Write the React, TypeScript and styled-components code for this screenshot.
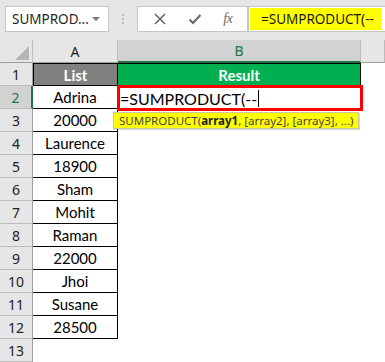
import React from "react";
import styled, { createGlobalStyle, css } from "styled-components";

const GlobalStyle = createGlobalStyle`
  html, body {
    margin: 0;
    padding: 0;
    background: #ffffff;
    overflow: hidden;
  }
`;

const Sheet = styled.div`
  width: 385px;
  height: 362px;
  display: flex;
  flex-direction: column;
  font-family: "Segoe UI", "Noto Sans", "Liberation Sans", sans-serif;
`;

const FormulaRow = styled.div`
  height: 40px;
  box-sizing: border-box;
  padding: 6px 0 8px 5px;
  display: flex;
  align-items: stretch;
  background: #e6e6e6;
`;

const NameBox = styled.div`
  width: 104px;
  box-sizing: border-box;
  border: 1px solid #c6c6c6;
  background: #fff;
  display: flex;
  align-items: center;
  justify-content: space-between;
  padding: 0 8px 0 6px;
  font-size: 13.5px;
  color: #262626;
  white-space: nowrap;
`;

const DropArrow = styled.span`
  width: 0;
  height: 0;
  border-left: 4px solid transparent;
  border-right: 4px solid transparent;
  border-top: 4px solid #777;
`;

const Grip = styled.div`
  width: 28px;
  display: flex;
  flex-direction: column;
  align-items: center;
  justify-content: center;
  gap: 2px;
  span {
    width: 2px;
    height: 2px;
    background: #b8b8b8;
  }
`;

const FxBox = styled.div`
  width: 111px;
  box-sizing: border-box;
  border: 1px solid #c6c6c6;
  background: #fff;
  display: flex;
  align-items: center;
  justify-content: space-around;
  padding: 0 4px;
`;

const FxLabel = styled.span`
  font-family: "Liberation Serif", "DejaVu Serif", serif;
  font-style: italic;
  font-size: 14px;
  color: #666;
  letter-spacing: -0.5px;
`;

const FormulaInput = styled.div`
  flex: 1;
  min-width: 0;
  box-sizing: border-box;
  border: 1px solid #c6c6c6;
  border-right: none;
  background: #fff;
  display: flex;
  align-items: stretch;
  padding: 1px 0 1px 1px;
`;

const Highlight = styled.span`
  background: #ffff00;
  display: flex;
  align-items: center;
  padding: 0 7px 0 11px;
  font-size: 13.5px;
  color: #1a1a1a;
  white-space: nowrap;
`;

const Grid = styled.div`
  position: relative;
  display: grid;
  grid-template-columns: 33px 85px 243px 1fr;
  grid-auto-rows: 23px;
  font-family: Lato, "Open Sans", sans-serif;
  font-size: 15px;
`;

const Corner = styled.div`
  background: #e6e6e6;
  border-right: 1px solid #bcbcbc;
  border-bottom: 1px solid #9e9e9e;
  box-sizing: border-box;
  position: relative;
  &::after {
    content: "";
    position: absolute;
    right: 3px;
    bottom: 2px;
    border-left: 14px solid transparent;
    border-bottom: 14px solid #b5b5b5;
  }
`;

const ColHead = styled.div<{ $active?: boolean }>`
  box-sizing: border-box;
  background: #e6e6e6;
  border-right: 1px solid #bcbcbc;
  border-bottom: 1px solid #9e9e9e;
  display: flex;
  align-items: center;
  justify-content: center;
  font-family: "Segoe UI", "Noto Sans", sans-serif;
  font-size: 14px;
  color: #222;
  ${(p) =>
    p.$active &&
    css`
      background: #d2d2d2;
      color: #217346;
      border-bottom: 2px solid #217346;
    `}
`;

const RowHead = styled.div<{ $active?: boolean }>`
  box-sizing: border-box;
  background: #e6e6e6;
  border-right: 1px solid #9e9e9e;
  border-bottom: 1px solid #bcbcbc;
  display: flex;
  align-items: center;
  justify-content: center;
  font-family: "Segoe UI", "Noto Sans", sans-serif;
  font-size: 14px;
  color: #222;
  ${(p) =>
    p.$active &&
    css`
      background: #d2d2d2;
      color: #217346;
      border-right: 2px solid #217346;
    `}
`;

const Cell = styled.div<{ $fill?: string; $boxed?: boolean; $leftEdge?: boolean }>`
  box-sizing: border-box;
  display: flex;
  align-items: center;
  justify-content: center;
  color: #000;
  background: ${(p) => p.$fill || "#fff"};
  ${(p) =>
    p.$boxed &&
    css`
      border-right: 1px solid #000;
      border-bottom: 1px solid #000;
    `}
  ${(p) => p.$leftEdge && "border-left: 1px solid #000;"}
`;

const HeadCell = styled(Cell)`
  color: #fff;
  font-weight: 700;
  border-top: 1px solid #000;
`;

const Empty = styled.div``;

const EditCell = styled.div`
  position: relative;
  z-index: 2;
  margin: -1px -2px -2px -1px;
  border: 3px solid #ff0000;
  background: #fff;
  display: flex;
  align-items: center;
  font-size: 16px;
  color: #000;
  white-space: nowrap;
`;

const Caret = styled.span`
  display: inline-block;
  width: 1px;
  height: 17px;
  background: #000;
  margin-left: 1px;
`;

const Tip = styled.div`
  position: absolute;
  left: 113px;
  top: 72px;
  z-index: 3;
  height: 17px;
  box-sizing: border-box;
  padding: 0 5px;
  background: #ffff00;
  border: 1px solid #c9c9a0;
  box-shadow: 1px 1px 1px rgba(0, 0, 0, 0.15);
  display: flex;
  align-items: center;
  font-family: "Segoe UI", "Noto Sans", sans-serif;
  font-size: 11.5px;
  color: #444;
  white-space: nowrap;
  b {
    color: #222;
  }
`;

const items = [
  "Adrina",
  "20000",
  "Laurence",
  "18900",
  "Sham",
  "Mohit",
  "Raman",
  "22000",
  "Jhoi",
  "Susane",
  "28500",
];

function XIcon() {
  return (
    <svg width="14" height="14" viewBox="0 0 14 14">
      <path d="M2 2 L12 12 M12 2 L2 12" stroke="#6a6a6a" strokeWidth="1.6" fill="none" />
    </svg>
  );
}

function CheckIcon() {
  return (
    <svg width="14" height="14" viewBox="0 0 14 14">
      <path d="M1.5 7.5 L5 11 L12.5 3" stroke="#6a6a6a" strokeWidth="2.2" fill="none" />
    </svg>
  );
}

export default function App() {
  return (
    <>
      <GlobalStyle />
      <Sheet>
        <FormulaRow>
          <NameBox>
            SUMPROD...
            <DropArrow />
          </NameBox>
          <Grip>
            <span />
            <span />
            <span />
          </Grip>
          <FxBox>
            <XIcon />
            <CheckIcon />
            <FxLabel>fx</FxLabel>
          </FxBox>
          <FormulaInput>
            <Highlight>=SUMPRODUCT(--</Highlight>
          </FormulaInput>
        </FormulaRow>
        <Grid>
          <Corner />
          <ColHead>A</ColHead>
          <ColHead $active>B</ColHead>
          <ColHead />

          <RowHead>1</RowHead>
          <HeadCell $fill="#808080" $boxed $leftEdge>
            List
          </HeadCell>
          <HeadCell $fill="#00b050" $boxed>
            Result
          </HeadCell>
          <Empty />

          <RowHead $active>2</RowHead>
          <Cell $boxed>{items[0]}</Cell>
          <EditCell>
            =SUMPRODUCT(--
            <Caret />
          </EditCell>
          <Empty />

          {items.slice(1).map((v, i) => (
            <React.Fragment key={v}>
              <RowHead>{i + 3}</RowHead>
              <Cell $boxed>{v}</Cell>
              <Empty />
              <Empty />
            </React.Fragment>
          ))}

          <RowHead>13</RowHead>
          <Empty />
          <Empty />
          <Empty />

          <Tip>
            SUMPRODUCT(<b>array1</b>, [array2], [array3], ...)
          </Tip>
        </Grid>
      </Sheet>
    </>
  );
}
